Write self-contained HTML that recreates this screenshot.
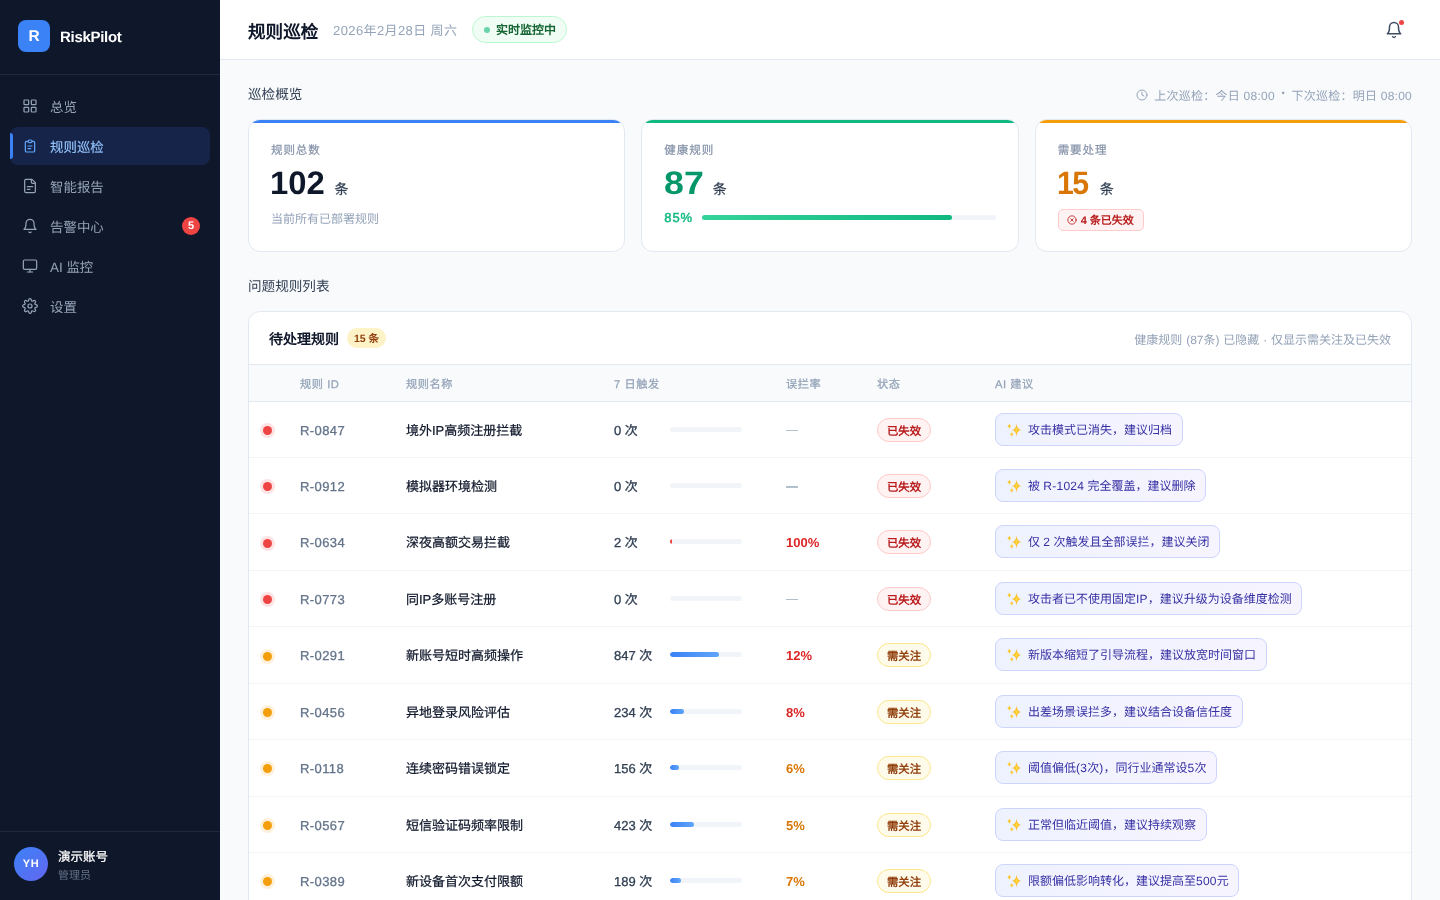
<!DOCTYPE html>
<html lang="zh-CN">
<head>
<meta charset="utf-8">
<title>RiskPilot</title>
<style>
*{box-sizing:border-box;margin:0;padding:0}
html,body{width:1440px;height:900px;overflow:hidden}
body{font-family:"Liberation Sans",sans-serif;background:#f8fafc;color:#0f172a;position:relative;-webkit-font-smoothing:antialiased;text-rendering:geometricPrecision}
svg{display:block}
.ico{fill:none;stroke:currentColor;stroke-width:2;stroke-linecap:round;stroke-linejoin:round}

/* sidebar */
.side{position:absolute;left:0;top:0;width:220px;height:900px;background:#0f172a}
.brand{position:absolute;left:0;top:0;width:220px;height:75px;border-bottom:1px solid #1e293b}
.logo{position:absolute;left:18px;top:20px;width:32px;height:32px;border-radius:8px;background:#3b82f6;color:#fff;font-weight:700;font-size:15.5px;line-height:33px;text-align:center}
.bname{position:absolute;left:60px;top:27.5px;font-size:15px;font-weight:700;color:#fff;line-height:20px;letter-spacing:-.3px}
.nav{position:absolute;left:10px;width:200px;height:38px;border-radius:8px;color:#94a3b8;font-size:13.44px}
.nav svg{position:absolute;left:12px;top:11px;width:16px;height:16px;stroke-width:1.85}
.nav span{position:absolute;left:40px;top:10.5px;line-height:20px;white-space:nowrap}
.nav.on{background:#172449;color:#93c5fd;-webkit-text-stroke:.15px #93c5fd}
.nav.on svg{color:#60a5fa}
.nav.on:before{content:"";position:absolute;left:0;top:6px;width:3px;height:26px;background:#3b82f6;border-radius:0 3px 3px 0}
.nbadge{position:absolute;right:10px;top:10px;width:18px;height:18px;border-radius:9px;background:#ef4444;color:#fff;font-size:11px;font-weight:700;line-height:19.5px;text-align:center}
.user{position:absolute;left:0;top:831px;width:220px;height:69px;border-top:1px solid #1e293b}
.ava{position:absolute;left:14px;top:15px;width:34px;height:34px;border-radius:17px;background:linear-gradient(135deg,#3b82f6,#6366f1);color:#fff;font-size:11px;font-weight:700;line-height:35px;text-align:center;letter-spacing:.5px}
.uname{position:absolute;left:58px;top:16px;font-size:12.5px;-webkit-text-stroke:.25px #fff;color:#fff;line-height:18px}
.urole{position:absolute;left:58px;top:36px;font-size:11px;color:#64748b;line-height:16px}

/* top bar */
.top{position:absolute;left:220px;top:0;width:1220px;height:60px;background:#fff;border-bottom:1px solid #e2e8f0}
.ttl{position:absolute;left:28px;top:18.5px;font-size:17.6px;font-weight:700;line-height:26px;color:#0f172a}
.date{position:absolute;left:113px;top:21.5px;font-size:13px;line-height:18px;color:#94a3b8;white-space:nowrap;letter-spacing:.4px}
.live{position:absolute;left:252px;top:16px;width:95px;height:27px;border-radius:14px;border:1px solid #bbf7d0;background:#f0fdf4;color:#166534;font-size:12px;font-weight:700}
.live i{position:absolute;left:10.5px;top:9.5px;width:6px;height:6px;border-radius:3px;background:#6ad4af}
.live span{position:absolute;left:23px;top:5px;line-height:17px;white-space:nowrap}
.bell{position:absolute;left:1165px;top:21px;width:18px;height:18px;color:#3f4d63}
.bdot{position:absolute;left:1178.8px;top:19.7px;width:5.4px;height:5.4px;border-radius:3px;background:#ef4444}

/* content */
.sec{position:absolute;left:248px;font-size:13.6px;line-height:20px;color:#334155}
.meta{position:absolute;right:28px;top:86.5px;font-size:12px;line-height:18px;color:#94a3b8;white-space:nowrap;display:flex;align-items:center}
.meta svg{width:12px;height:12px;margin-right:6.5px;margin-top:-1px}
.meta b{font-weight:400;letter-spacing:.25px}
.meta i{font-style:normal;width:16.5px;text-align:center;font-size:9.5px;position:relative;top:-1.2px}
.card{position:absolute;top:119px;width:377.33px;height:133px;background:#fff;border:1px solid #e2e8f0;border-radius:12px;overflow:hidden}
.card:before{content:"";position:absolute;left:0;top:0;right:0;height:3px}
.c1:before{background:#3b82f6}.c2:before{background:#10b981}.c3:before{background:#f59e0b}
.clab{position:absolute;left:22px;top:21.5px;font-size:11.52px;line-height:18px;color:#8290a6;-webkit-text-stroke:.2px #8290a6;letter-spacing:.92px}
.cnum{position:absolute;left:22px;top:43px;font-size:32.5px;font-weight:700;line-height:40px;white-space:nowrap;transform-origin:0 50%}
.cem{position:absolute;top:58.5px;font-size:14px;-webkit-text-stroke:.25px #334155;color:#334155;line-height:20px}
.csub{position:absolute;left:22px;top:90px;font-size:12px;line-height:18px;color:#94a3b8}

.tbl{position:absolute;left:248px;top:311px;width:1164px;height:620px;background:#fff;border:1px solid #e2e8f0;border-radius:12px;overflow:hidden}
.th1{position:absolute;left:20px;top:16.5px;font-size:14px;font-weight:700;line-height:20px;color:#0f172a}
.cnt{position:absolute;left:98px;top:16px;height:20px;width:39px;border-radius:10px;background:#fef3c7;color:#92400e;font-size:10.5px;font-weight:700;line-height:23px;text-align:center;overflow:hidden}
.hint{position:absolute;right:20px;top:19px;font-size:12px;line-height:18px;color:#94a3b8;white-space:nowrap;word-spacing:.5px}
.thead{position:absolute;left:0;top:52px;width:100%;height:38px;background:#f8fafc;border-top:1px solid #e2e8f0;border-bottom:1px solid #e2e8f0;font-size:12px;color:#94a3b8}
.thead span{position:absolute;top:10.75px;line-height:18px;white-space:nowrap;letter-spacing:.56px;font-size:11.2px;-webkit-text-stroke:.25px #94a3b8}
.row{position:absolute;left:0;width:100%;height:56.43px;border-bottom:1px solid #f1f5f9}
.dot{position:absolute;left:14px;top:24.2px;width:9px;height:9px;border-radius:5px}
.dot.r{background:#ef4444;box-shadow:0 0 0 3px rgba(239,68,68,.15)}
.dot.o{background:#f59e0b;box-shadow:0 0 0 3px rgba(245,158,11,.15)}
.rid{position:absolute;left:51px;top:20px;font-size:13px;line-height:18px;color:#64748b;letter-spacing:.4px;-webkit-text-stroke:.3px #64748b}
.rname{position:absolute;left:157px;top:20px;font-size:13px;line-height:18px;color:#0f172a;white-space:nowrap;-webkit-text-stroke:.22px #0f172a}
.rcnt{position:absolute;left:365px;top:20px;font-size:13px;line-height:18px;color:#334155;white-space:nowrap;-webkit-text-stroke:.3px #334155}
.bar{position:absolute;left:421px;top:25px;width:72px;height:5px;border-radius:3px;background:#f1f5f9;overflow:hidden}
.bar i{position:absolute;left:0;top:0;height:5px;border-radius:3px;background:linear-gradient(90deg,#3b82f6,#60a5fa)}
.rate{position:absolute;left:537px;top:20px;font-size:13px;line-height:18px;font-weight:700;white-space:nowrap}
.rate.na{top:28px;width:12px;height:1.6px;background:#b4bfce;font-size:0}
.rate.hi{color:#dc2626}.rate.mid{color:#d97706}
.st{position:absolute;left:628px;top:16px;width:54px;height:24px;border-radius:12px;font-size:11.4px;font-weight:700;line-height:27px;text-align:center;overflow:hidden}
.st.dead{background:#fef2f2;border:1px solid #fecaca;color:#b91c1c}
.st.warn{background:#fffbeb;border:1px solid #fde68a;color:#92400e}
.ai{position:absolute;left:746px;top:11px;height:33px;border-radius:8px;background:linear-gradient(100deg,#eef2ff,#f6f4ff);border:1px solid #cdd5fd;color:#3730a3;font-size:12px;line-height:18px;padding:7px 9.5px 0 32px;white-space:nowrap}
.ai svg{position:absolute;left:9.55px;top:8px;width:16px;height:16px}
.ai .l{letter-spacing:.25px}
</style>
</head>
<body>
<svg width="0" height="0" style="position:absolute"><defs><radialGradient id="sg" cx="50%" cy="50%" r="50%"><stop offset="0" stop-color="#fde047"/><stop offset=".45" stop-color="#fbbf24"/><stop offset="1" stop-color="#f59e0b" stop-opacity=".75"/></radialGradient></defs></svg>

<div id="wrap" style="position:absolute;left:0;top:0;width:1440px;height:900px;will-change:transform">
<div class="side">
  <div class="brand"><div class="logo">R</div><div class="bname">RiskPilot</div></div>

  <div class="nav" style="top:87px"><svg class="ico" viewBox="0 0 24 24"><rect x="3" y="3" width="7" height="7" rx="1"/><rect x="14" y="3" width="7" height="7" rx="1"/><rect x="14" y="14" width="7" height="7" rx="1"/><rect x="3" y="14" width="7" height="7" rx="1"/></svg><span>总览</span></div>
  <div class="nav on" style="top:127px"><svg class="ico" viewBox="0 0 24 24"><path d="M9 5H7a2 2 0 0 0-2 2v12a2 2 0 0 0 2 2h10a2 2 0 0 0 2-2V7a2 2 0 0 0-2-2h-2M9 5a2 2 0 0 0 2 2h2a2 2 0 0 0 2-2M9 5a2 2 0 0 1 2-2h2a2 2 0 0 1 2 2"/><path d="M9 12h6"/><path d="M9 16h4"/></svg><span>规则巡检</span></div>
  <div class="nav" style="top:167px"><svg class="ico" viewBox="0 0 24 24"><path d="M15 2H6a2 2 0 0 0-2 2v16a2 2 0 0 0 2 2h12a2 2 0 0 0 2-2V7Z"/><path d="M14 2v4a2 2 0 0 0 2 2h4"/><path d="M16 13H8"/><path d="M12 17H8"/></svg><span>智能报告</span></div>
  <div class="nav" style="top:207px"><svg class="ico" viewBox="0 0 24 24"><path d="M6 8a6 6 0 0 1 12 0c0 7 3 9 3 9H3s3-2 3-9"/><path d="M10.3 21a1.94 1.94 0 0 0 3.4 0"/></svg><span>告警中心</span><div class="nbadge">5</div></div>
  <div class="nav" style="top:247px"><svg class="ico" viewBox="0 0 24 24"><rect x="2" y="3" width="20" height="14" rx="2"/><path d="M8 21h8"/><path d="M12 17v4"/></svg><span>AI 监控</span></div>
  <div class="nav" style="top:287px"><svg class="ico" viewBox="0 0 24 24"><circle cx="12" cy="12" r="3"/><path d="M19.4 15a1.65 1.65 0 0 0 .33 1.820l.06.06a2 2 0 0 1 0 2.830 2 2 0 0 1-2.830 0l-.06-.06a1.65 1.65 0 0 0-1.820-.33 1.65 1.65 0 0 0-1 1.510V21a2 2 0 0 1-2 2 2 2 0 0 1-2-2v-.09A1.65 1.65 0 0 0 9 19.4a1.65 1.65 0 0 0-1.820.33l-.06.06a2 2 0 0 1-2.830 0 2 2 0 0 1 0-2.830l.06-.06a1.65 1.65 0 0 0 .33-1.820 1.65 1.65 0 0 0-1.510-1H3a2 2 0 0 1-2-2 2 2 0 0 1 2-2h.09A1.65 1.65 0 0 0 4.600 9a1.65 1.65 0 0 0-.33-1.820l-.06-.06a2 2 0 0 1 0-2.830 2 2 0 0 1 2.830 0l.06.06a1.65 1.65 0 0 0 1.820.33H9a1.65 1.65 0 0 0 1-1.510V3a2 2 0 0 1 2-2 2 2 0 0 1 2 2v.09a1.65 1.65 0 0 0 1 1.510 1.65 1.65 0 0 0 1.820-.33l.06-.06a2 2 0 0 1 2.830 0 2 2 0 0 1 0 2.830l-.06.06a1.65 1.65 0 0 0-.33 1.820V9a1.65 1.65 0 0 0 1.510 1H21a2 2 0 0 1 2 2 2 2 0 0 1-2 2h-.09a1.65 1.65 0 0 0-1.510 1z"/></svg><span>设置</span></div>

  <div class="user"><div class="ava">YH</div><div class="uname">演示账号</div><div class="urole">管理员</div></div>
</div>

<div class="top">
  <div class="ttl">规则巡检</div>
  <div class="date">2026年2月28日 周六</div>
  <div class="live"><i></i><span>实时监控中</span></div>
  <svg class="bell ico" viewBox="0 0 24 24"><path d="M6 8a6 6 0 0 1 12 0c0 7 3 9 3 9H3s3-2 3-9"/><path d="M10.3 21a1.94 1.94 0 0 0 3.4 0"/></svg>
  <div class="bdot"></div>
</div>

<div class="sec" style="top:85px">巡检概览</div>
<div class="meta"><svg class="ico" viewBox="0 0 24 24"><circle cx="12" cy="12" r="10"/><path d="M12 6v6l4 2"/></svg><b>上次巡检：今日 08:00</b><i>•</i><b>下次巡检：明日 08:00</b></div>

<div class="card c1" style="left:248px">
  <div class="clab">规则总数</div>
  <div class="cnum" style="color:#0f172a;left:21px;transform:scaleX(1.01)">102</div><div class="cem" style="left:85.5px">条</div>
  <div class="csub">当前所有已部署规则</div>
</div>
<div class="card c2" style="left:641.33px">
  <div class="clab">健康规则</div>
  <div class="cnum" style="color:#059669;transform:scaleX(1.1)">87</div><div class="cem" style="left:70.5px">条</div>
  <div class="csub" style="color:#10b981;font-size:13px;font-weight:400;-webkit-text-stroke:.45px #10b981;top:88.5px;letter-spacing:.9px">85%</div>
  <div style="position:absolute;left:60px;top:95px;width:294px;height:5px;border-radius:3px;background:#f1f5f9"><div style="width:250px;height:5px;border-radius:3px;background:linear-gradient(90deg,#34d399,#10b981)"></div></div>
</div>
<div class="card c3" style="left:1034.67px">
  <div class="clab">需要处理</div>
  <div class="cnum" style="color:#d97706;left:21.5px;letter-spacing:-1.6px;transform:scaleX(.93)">15</div><div class="cem" style="left:64.2px">条</div>
  <div style="position:absolute;left:22px;top:89px;width:86px;height:22px;border-radius:5px;background:#fef2f2;border:1px solid #fecaca;color:#b91c1c;font-size:11px;font-weight:700;line-height:23.5px;padding-left:22px;white-space:nowrap"><svg class="ico" viewBox="0 0 24 24" style="position:absolute;left:8px;top:5px;width:10px;height:10px"><circle cx="12" cy="12" r="10"/><path d="m15 9-6 6"/><path d="m9 9 6 6"/></svg>4 条已失效</div>
</div>

<div class="sec" style="top:277px">问题规则列表</div>

<div class="tbl">
  <div class="th1">待处理规则</div>
  <div class="cnt">15 条</div>
  <div class="hint">健康规则 (87条) 已隐藏 · 仅显示需关注及已失效</div>
  <div class="thead">
    <span style="left:51px">规则 ID</span><span style="left:157px">规则名称</span><span style="left:365px">7 日触发</span><span style="left:537px">误拦率</span><span style="left:628px">状态</span><span style="left:746px">AI 建议</span>
  </div>
  <!--ROWS-->
  <div class="row" style="top:89.60px"><div class="dot r"></div><div class="rid">R-0847</div><div class="rname">境外IP高频注册拦截</div><div class="rcnt">0 次</div><div class="bar"></div><div class="rate na">—</div><div class="st dead">已失效</div><div class="ai"><svg viewBox="0 0 16 16"><path d="M10.50 1.50Q10.90 7.48 15.50 8.00Q10.90 8.52 10.50 14.50Q10.10 8.52 5.50 8.00Q10.10 7.48 10.50 1.50Z" fill="url(#sg)"/><path d="M3.30 1.30Q3.54 3.85 5.30 4.20Q3.54 4.55 3.30 7.10Q3.06 4.55 1.30 4.20Q3.06 3.85 3.30 1.30Z" fill="#fbc62d"/><path d="M5.80 9.70Q6.04 11.99 7.80 12.30Q6.04 12.61 5.80 14.90Q5.56 12.61 3.80 12.30Q5.56 11.99 5.80 9.70Z" fill="#fbc62d"/></svg>攻击模式已消失，建议归档</div></div>
  <div class="row" style="top:146.03px"><div class="dot r"></div><div class="rid">R-0912</div><div class="rname">模拟器环境检测</div><div class="rcnt">0 次</div><div class="bar"></div><div class="rate na">—</div><div class="st dead">已失效</div><div class="ai"><svg viewBox="0 0 16 16"><path d="M10.50 1.50Q10.90 7.48 15.50 8.00Q10.90 8.52 10.50 14.50Q10.10 8.52 5.50 8.00Q10.10 7.48 10.50 1.50Z" fill="url(#sg)"/><path d="M3.30 1.30Q3.54 3.85 5.30 4.20Q3.54 4.55 3.30 7.10Q3.06 4.55 1.30 4.20Q3.06 3.85 3.30 1.30Z" fill="#fbc62d"/><path d="M5.80 9.70Q6.04 11.99 7.80 12.30Q6.04 12.61 5.80 14.90Q5.56 12.61 3.80 12.30Q5.56 11.99 5.80 9.70Z" fill="#fbc62d"/></svg>被 <span class="l">R-1024</span> 完全覆盖，建议删除</div></div>
  <div class="row" style="top:202.46px"><div class="dot r"></div><div class="rid">R-0634</div><div class="rname">深夜高额交易拦截</div><div class="rcnt">2 次</div><div class="bar"><i style="width:2px;background:#ef4444"></i></div><div class="rate hi">100%</div><div class="st dead">已失效</div><div class="ai"><svg viewBox="0 0 16 16"><path d="M10.50 1.50Q10.90 7.48 15.50 8.00Q10.90 8.52 10.50 14.50Q10.10 8.52 5.50 8.00Q10.10 7.48 10.50 1.50Z" fill="url(#sg)"/><path d="M3.30 1.30Q3.54 3.85 5.30 4.20Q3.54 4.55 3.30 7.10Q3.06 4.55 1.30 4.20Q3.06 3.85 3.30 1.30Z" fill="#fbc62d"/><path d="M5.80 9.70Q6.04 11.99 7.80 12.30Q6.04 12.61 5.80 14.90Q5.56 12.61 3.80 12.30Q5.56 11.99 5.80 9.70Z" fill="#fbc62d"/></svg>仅 <span class="l">2</span> 次触发且全部误拦，建议关闭</div></div>
  <div class="row" style="top:258.89px"><div class="dot r"></div><div class="rid">R-0773</div><div class="rname">同IP多账号注册</div><div class="rcnt">0 次</div><div class="bar"></div><div class="rate na">—</div><div class="st dead">已失效</div><div class="ai"><svg viewBox="0 0 16 16"><path d="M10.50 1.50Q10.90 7.48 15.50 8.00Q10.90 8.52 10.50 14.50Q10.10 8.52 5.50 8.00Q10.10 7.48 10.50 1.50Z" fill="url(#sg)"/><path d="M3.30 1.30Q3.54 3.85 5.30 4.20Q3.54 4.55 3.30 7.10Q3.06 4.55 1.30 4.20Q3.06 3.85 3.30 1.30Z" fill="#fbc62d"/><path d="M5.80 9.70Q6.04 11.99 7.80 12.30Q6.04 12.61 5.80 14.90Q5.56 12.61 3.80 12.30Q5.56 11.99 5.80 9.70Z" fill="#fbc62d"/></svg>攻击者已不使用固定<span class="l">IP</span>，建议升级为设备维度检测</div></div>
  <div class="row" style="top:315.32px"><div class="dot o"></div><div class="rid">R-0291</div><div class="rname">新账号短时高频操作</div><div class="rcnt">847 次</div><div class="bar"><i style="width:49px"></i></div><div class="rate hi">12%</div><div class="st warn">需关注</div><div class="ai"><svg viewBox="0 0 16 16"><path d="M10.50 1.50Q10.90 7.48 15.50 8.00Q10.90 8.52 10.50 14.50Q10.10 8.52 5.50 8.00Q10.10 7.48 10.50 1.50Z" fill="url(#sg)"/><path d="M3.30 1.30Q3.54 3.85 5.30 4.20Q3.54 4.55 3.30 7.10Q3.06 4.55 1.30 4.20Q3.06 3.85 3.30 1.30Z" fill="#fbc62d"/><path d="M5.80 9.70Q6.04 11.99 7.80 12.30Q6.04 12.61 5.80 14.90Q5.56 12.61 3.80 12.30Q5.56 11.99 5.80 9.70Z" fill="#fbc62d"/></svg>新版本缩短了引导流程，建议放宽时间窗口</div></div>
  <div class="row" style="top:371.75px"><div class="dot o"></div><div class="rid">R-0456</div><div class="rname">异地登录风险评估</div><div class="rcnt">234 次</div><div class="bar"><i style="width:14px"></i></div><div class="rate hi">8%</div><div class="st warn">需关注</div><div class="ai"><svg viewBox="0 0 16 16"><path d="M10.50 1.50Q10.90 7.48 15.50 8.00Q10.90 8.52 10.50 14.50Q10.10 8.52 5.50 8.00Q10.10 7.48 10.50 1.50Z" fill="url(#sg)"/><path d="M3.30 1.30Q3.54 3.85 5.30 4.20Q3.54 4.55 3.30 7.10Q3.06 4.55 1.30 4.20Q3.06 3.85 3.30 1.30Z" fill="#fbc62d"/><path d="M5.80 9.70Q6.04 11.99 7.80 12.30Q6.04 12.61 5.80 14.90Q5.56 12.61 3.80 12.30Q5.56 11.99 5.80 9.70Z" fill="#fbc62d"/></svg>出差场景误拦多，建议结合设备信任度</div></div>
  <div class="row" style="top:428.18px"><div class="dot o"></div><div class="rid">R-0118</div><div class="rname">连续密码错误锁定</div><div class="rcnt">156 次</div><div class="bar"><i style="width:9px"></i></div><div class="rate mid">6%</div><div class="st warn">需关注</div><div class="ai"><svg viewBox="0 0 16 16"><path d="M10.50 1.50Q10.90 7.48 15.50 8.00Q10.90 8.52 10.50 14.50Q10.10 8.52 5.50 8.00Q10.10 7.48 10.50 1.50Z" fill="url(#sg)"/><path d="M3.30 1.30Q3.54 3.85 5.30 4.20Q3.54 4.55 3.30 7.10Q3.06 4.55 1.30 4.20Q3.06 3.85 3.30 1.30Z" fill="#fbc62d"/><path d="M5.80 9.70Q6.04 11.99 7.80 12.30Q6.04 12.61 5.80 14.90Q5.56 12.61 3.80 12.30Q5.56 11.99 5.80 9.70Z" fill="#fbc62d"/></svg>阈值偏低<span class="l">(3</span>次<span class="l">)</span>，同行业通常设<span class="l">5</span>次</div></div>
  <div class="row" style="top:484.61px"><div class="dot o"></div><div class="rid">R-0567</div><div class="rname">短信验证码频率限制</div><div class="rcnt">423 次</div><div class="bar"><i style="width:24px"></i></div><div class="rate mid">5%</div><div class="st warn">需关注</div><div class="ai"><svg viewBox="0 0 16 16"><path d="M10.50 1.50Q10.90 7.48 15.50 8.00Q10.90 8.52 10.50 14.50Q10.10 8.52 5.50 8.00Q10.10 7.48 10.50 1.50Z" fill="url(#sg)"/><path d="M3.30 1.30Q3.54 3.85 5.30 4.20Q3.54 4.55 3.30 7.10Q3.06 4.55 1.30 4.20Q3.06 3.85 3.30 1.30Z" fill="#fbc62d"/><path d="M5.80 9.70Q6.04 11.99 7.80 12.30Q6.04 12.61 5.80 14.90Q5.56 12.61 3.80 12.30Q5.56 11.99 5.80 9.70Z" fill="#fbc62d"/></svg>正常但临近阈值，建议持续观察</div></div>
  <div class="row" style="top:541.04px"><div class="dot o"></div><div class="rid">R-0389</div><div class="rname">新设备首次支付限额</div><div class="rcnt">189 次</div><div class="bar"><i style="width:11px"></i></div><div class="rate mid">7%</div><div class="st warn">需关注</div><div class="ai"><svg viewBox="0 0 16 16"><path d="M10.50 1.50Q10.90 7.48 15.50 8.00Q10.90 8.52 10.50 14.50Q10.10 8.52 5.50 8.00Q10.10 7.48 10.50 1.50Z" fill="url(#sg)"/><path d="M3.30 1.30Q3.54 3.85 5.30 4.20Q3.54 4.55 3.30 7.10Q3.06 4.55 1.30 4.20Q3.06 3.85 3.30 1.30Z" fill="#fbc62d"/><path d="M5.80 9.70Q6.04 11.99 7.80 12.30Q6.04 12.61 5.80 14.90Q5.56 12.61 3.80 12.30Q5.56 11.99 5.80 9.70Z" fill="#fbc62d"/></svg>限额偏低影响转化，建议提高至<span class="l">500</span>元</div></div>
  <div class="row" style="top:597.47px"><div class="dot o"></div><div class="rid">R-0702</div><div class="rname">批量查询接口限流</div><div class="rcnt">98 次</div><div class="bar"><i style="width:6px"></i></div><div class="rate mid">4%</div><div class="st warn">需关注</div><div class="ai"><svg viewBox="0 0 16 16"><path d="M10.50 1.50Q10.90 7.48 15.50 8.00Q10.90 8.52 10.50 14.50Q10.10 8.52 5.50 8.00Q10.10 7.48 10.50 1.50Z" fill="url(#sg)"/><path d="M3.30 1.30Q3.54 3.85 5.30 4.20Q3.54 4.55 3.30 7.10Q3.06 4.55 1.30 4.20Q3.06 3.85 3.30 1.30Z" fill="#fbc62d"/><path d="M5.80 9.70Q6.04 11.99 7.80 12.30Q6.04 12.61 5.80 14.90Q5.56 12.61 3.80 12.30Q5.56 11.99 5.80 9.70Z" fill="#fbc62d"/></svg>建议按调用方分级限流</div></div>
  <!--/ROWS-->
</div>
</div>

</body>
</html>
